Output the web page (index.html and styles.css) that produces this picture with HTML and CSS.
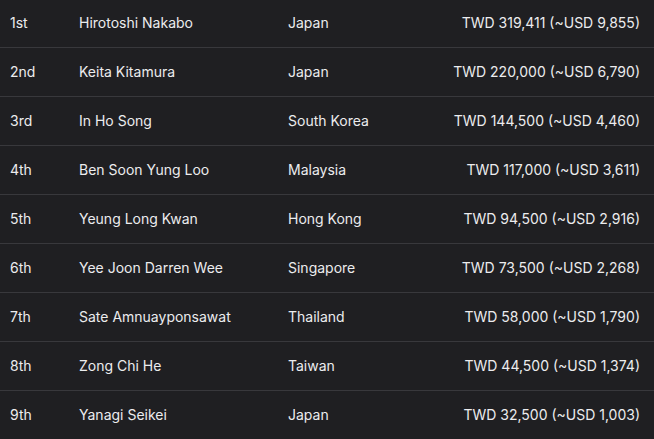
FILE: index.html
```html
<!DOCTYPE html>
<html>
<head>
<meta charset="utf-8">
<link rel="stylesheet" href="styles.css">
</head>
<body>
<div class="table">
  <div class="row"><span class="rank">1st</span><span class="name">Hirotoshi Nakabo</span><span class="country">Japan</span><span class="prize">TWD 319,411 (~USD 9,855)</span></div>
  <div class="row"><span class="rank">2nd</span><span class="name">Keita Kitamura</span><span class="country">Japan</span><span class="prize">TWD 220,000 (~USD 6,790)</span></div>
  <div class="row"><span class="rank">3rd</span><span class="name">In Ho Song</span><span class="country">South Korea</span><span class="prize">TWD 144,500 (~USD 4,460)</span></div>
  <div class="row"><span class="rank">4th</span><span class="name">Ben Soon Yung Loo</span><span class="country">Malaysia</span><span class="prize">TWD 117,000 (~USD 3,611)</span></div>
  <div class="row"><span class="rank">5th</span><span class="name">Yeung Long Kwan</span><span class="country">Hong Kong</span><span class="prize">TWD 94,500 (~USD 2,916)</span></div>
  <div class="row"><span class="rank">6th</span><span class="name">Yee Joon Darren Wee</span><span class="country">Singapore</span><span class="prize">TWD 73,500 (~USD 2,268)</span></div>
  <div class="row"><span class="rank">7th</span><span class="name">Sate Amnuayponsawat</span><span class="country">Thailand</span><span class="prize">TWD 58,000 (~USD 1,790)</span></div>
  <div class="row"><span class="rank">8th</span><span class="name">Zong Chi He</span><span class="country">Taiwan</span><span class="prize">TWD 44,500 (~USD 1,374)</span></div>
  <div class="row last"><span class="rank">9th</span><span class="name">Yanagi Seikei</span><span class="country">Japan</span><span class="prize">TWD 32,500 (~USD 1,003)</span></div>
</div>
</body>
</html>
```
FILE: styles.css
```css
html, body {
  margin: 0;
  padding: 0;
  background: #1f1f22;
}
body {
  font-family: Inter, "Noto Sans", sans-serif;
  font-size: 14px;
  color: #ececee;
  overflow: hidden;
}
.table {
  margin-top: -1px;
  display: flex;
  flex-direction: column;
}
.row {
  display: grid;
  grid-template-columns: 69px 209px 1fr auto;
  align-items: center;
  height: 48px;
  padding: 0 14px 1px 10px;
  box-sizing: content-box;
  height: 47px;
  border-bottom: 1px solid #38383c;
}
.row.last {
  border-bottom: none;
}
.prize {
  text-align: right;
}
```
